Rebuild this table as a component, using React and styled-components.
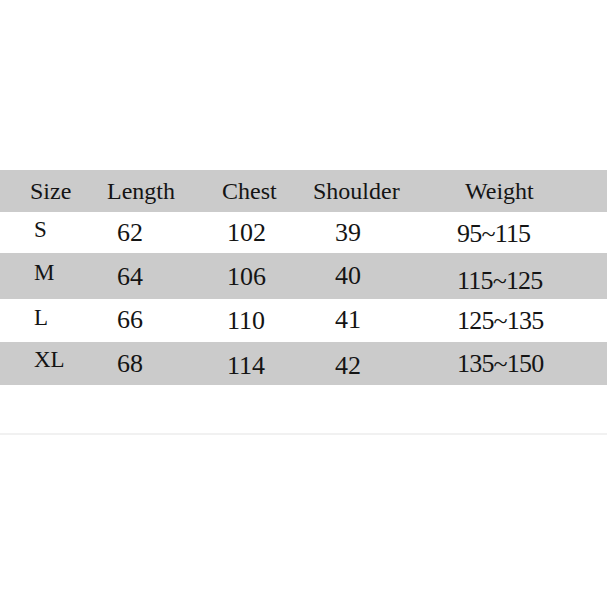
import React from 'react'
import styled, { createGlobalStyle } from 'styled-components'

const Global = createGlobalStyle`
  html, body {
    margin: 0;
    padding: 0;
    background: #fff;
  }
`

const Page = styled.div`
  width: 607px;
  height: 607px;
  padding-top: 170px;
  box-sizing: border-box;
  font-family: "Liberation Serif", "Times New Roman", serif;
  color: #141414;
  overflow: hidden;
`

const Table = styled.div`
  display: flex;
  flex-direction: column;
`

const Row = styled.div`
  display: grid;
  grid-template-columns: 100px 115px 90px 145px 1fr;
  height: ${p => p.h}px;
  background: ${p => (p.shaded ? '#cbcbcb' : '#fff')};
  align-items: center;
`

const Cell = styled.div`
  font-size: ${p => p.size || 24}px;
  line-height: 1;
  padding-left: ${p => p.pad}px;
  transform: translateY(${p => p.dy || 0}px);
  letter-spacing: ${p => (p.tight ? '-0.8px' : '0')};
  white-space: nowrap;
`

const Rule = styled.div`
  margin-top: 48px;
  height: 2px;
  background: #f1f1f1;
`

const head = ['Size', 'Length', 'Chest', 'Shoulder', 'Weight']
const headPad = [30, 7, 7, 8, 15]

const rows = [
  { h: 41, cells: ['S', '62', '102', '39', '95~115'], dy: [-3, 0, 0, 0, 1] },
  { h: 46, cells: ['M', '64', '106', '40', '115~125'], dy: [-4, 1, 1, 0, 5] },
  { h: 43, cells: ['L', '66', '110', '41', '125~135'], dy: [-3, -1, 0, -1, 0] },
  { h: 43, cells: ['XL', '68', '114', '42', '135~150'], dy: [-4, 0, 2, 2, 0] },
]

const dataPad = [34, 17, 12, 30, 7]

export default function App() {
  return (
    <Page>
      <Global />
      <Table>
        <Row h={42} shaded>
          {head.map((t, i) => (
            <Cell key={t} pad={headPad[i]}>{t}</Cell>
          ))}
        </Row>
        {rows.map((r, ri) => (
          <Row key={r.cells[0]} h={r.h} shaded={ri % 2 === 1}>
            {r.cells.map((t, i) => (
              <Cell
                key={i}
                pad={dataPad[i]}
                dy={r.dy[i]}
                size={i === 0 ? 23 : 26}
                tight={i === 4}
              >
                {t}
              </Cell>
            ))}
          </Row>
        ))}
      </Table>
      <Rule />
    </Page>
  )
}
